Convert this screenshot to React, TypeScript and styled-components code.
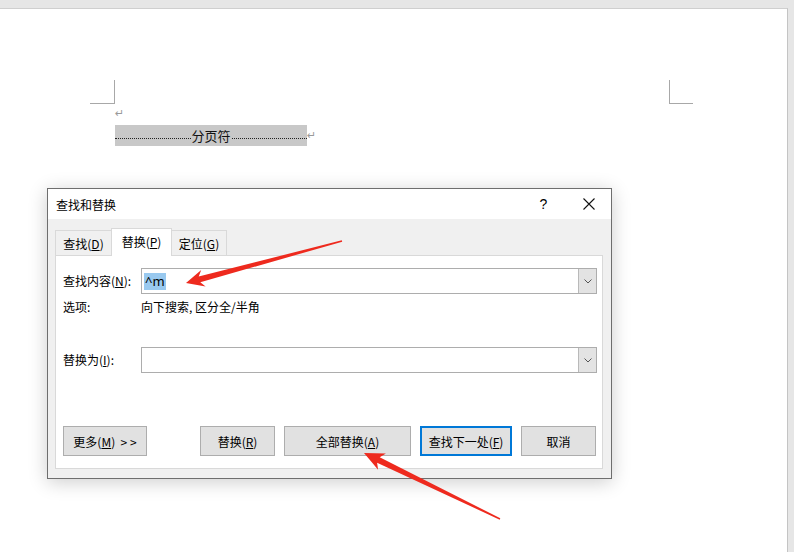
import React from "react";
import styled, { createGlobalStyle } from "styled-components";

const GlobalStyle = createGlobalStyle`
  html, body { margin: 0; padding: 0; background: #e6e6e6; }
  body { font-family: "Noto Sans CJK SC", "Noto Sans", sans-serif; }
  * { box-sizing: border-box; }
`;

const Root = styled.div`
  position: relative;
  width: 794px;
  height: 552px;
  overflow: hidden;
  background: #e6e6e6;
  padding-top: 8px;
`;

const Page = styled.div`
  width: 788px;
  height: 544px;
  background: #ffffff;
  border-top: 1px solid #cfcfcf;
  border-right: 1px solid #c4c4c4;
  padding-top: 71px;
`;

const MarkRow = styled.div`
  display: flex;
  justify-content: space-between;
  padding: 0 94px 0 90px;
`;

const CornerMark = styled.div<{ $side: "left" | "right" }>`
  width: ${(p) => (p.$side === "left" ? 25 : 24)}px;
  height: 24px;
  border-bottom: 1px solid #a8a8a8;
  ${(p) => (p.$side === "left" ? "border-right: 1px solid #a8a8a8;" : "border-left: 1px solid #a8a8a8;")}
`;

const DocBody = styled.div`
  padding-left: 115px;
`;

const ParaMark = styled.div`
  height: 21px;
  font-family: "DejaVu Sans", sans-serif;
  font-size: 11px;
  line-height: 20px;
  color: #9a9a9a;
`;

const BreakRow = styled.div`
  display: flex;
  align-items: center;
`;

const BreakBlock = styled.div`
  width: 192px;
  height: 21px;
  background: #c8c8c8;
  display: flex;
  align-items: center;
`;

const Dots = styled.span`
  flex: 1;
  align-self: flex-end;
  margin-bottom: 7px;
  border-top: 1px dotted #222;
`;

const BreakText = styled.span`
  font-size: 13px;
  line-height: 16px;
  color: #111;
  padding: 0 1px;
`;

const TrailMark = styled.span`
  font-family: "DejaVu Sans", sans-serif;
  font-size: 11px;
  color: #9a9a9a;
  margin-top: 0px;
`;

const Dialog = styled.div`
  position: absolute;
  left: 47px;
  top: 188px;
  width: 565px;
  height: 291px;
  border: 1px solid #6e6e6e;
  background: #f0f0f0;
  box-shadow: 0 3px 18px rgba(0, 0, 0, 0.2);
  display: flex;
  flex-direction: column;
  font-size: 12px;
  color: #000;
`;

const TitleBar = styled.div`
  height: 30px;
  background: #fff;
  display: flex;
  align-items: center;
  padding-left: 8px;
`;

const Title = styled.span`
  flex: 1;
  font-size: 12px;
`;

const TitleButton = styled.div`
  width: 45px;
  height: 30px;
  display: flex;
  align-items: center;
  justify-content: center;
  font-family: "Liberation Sans", sans-serif;
  font-size: 14px;
`;

const DialogBody = styled.div`
  flex: 1;
  display: flex;
  flex-direction: column;
  padding: 9px 8px 9px 7px;
`;

const TabStrip = styled.div`
  display: flex;
  align-items: flex-end;
  height: 27px;
  position: relative;
  z-index: 1;
`;

const Tab = styled.div<{ $active?: boolean; $w: number; $first?: boolean }>`
  width: ${(p) => p.$w}px;
  height: ${(p) => (p.$active ? 28 : 25)}px;
  margin-bottom: ${(p) => (p.$active ? -1 : 0)}px;
  margin-left: ${(p) => (p.$first ? 0 : -1)}px;
  background: ${(p) => (p.$active ? "#fff" : "#f0f0f0")};
  border: 1px solid #d9d9d9;
  border-bottom: none;
  position: relative;
  z-index: ${(p) => (p.$active ? 2 : 1)};
  display: flex;
  align-items: center;
  justify-content: center;
  padding-bottom: ${(p) => (p.$active ? 2 : 0)}px;
  font-size: 12px;
`;

const Panel = styled.div`
  flex: 1;
  background: #fff;
  border: 1px solid #d9d9d9;
  padding: 12px 5px 12px 7px;
  display: flex;
  flex-direction: column;
`;

const FieldRow = styled.div<{ $gap?: number }>`
  display: flex;
  align-items: center;
  margin-top: ${(p) => p.$gap ?? 0}px;
`;

const Label = styled.span`
  width: 78px;
  flex-shrink: 0;
  font-size: 12px;
  line-height: 16px;
`;

const Value = styled.span`
  font-size: 12px;
  line-height: 16px;
`;

const Combo = styled.div`
  flex: 1;
  height: 26px;
  border: 1px solid #adadad;
  background: #fff;
  display: flex;
  align-items: center;
`;

const ComboText = styled.div`
  flex: 1;
  padding-left: 2px;
  display: flex;
  align-items: center;
`;

const Selected = styled.span`
  font-family: "Noto Sans", sans-serif;
  font-size: 13px;
  line-height: 17px;
  padding: 0 1px;
  background: #99c9ef;
  color: #000;
`;

const DropButton = styled.div`
  width: 18px;
  align-self: stretch;
  background: #e3e3e3;
  border-left: 1px solid #b9b9b9;
  display: flex;
  align-items: center;
  justify-content: center;
`;

const ButtonRow = styled.div`
  margin-top: auto;
  display: flex;
  align-items: center;
  padding-right: 1px;
`;

const ButtonGroup = styled.div`
  margin-left: auto;
  display: flex;
  gap: 9px;
`;

const Button = styled.div<{ $w: number; $primary?: boolean }>`
  width: ${(p) => p.$w}px;
  height: 30px;
  background: #e1e1e1;
  border: ${(p) => (p.$primary ? "2px solid #0078d7" : "1px solid #adadad")};
  display: flex;
  align-items: center;
  justify-content: center;
  font-size: 12px;
  white-space: nowrap;
`;

const Arrows = styled.svg`
  position: absolute;
  left: 0;
  top: 0;
  pointer-events: none;
`;

type Pt = [number, number];

function arrowPoints(tail: Pt, tip: Pt, headLen: number, headW: number, tailW: number, neckW: number): string {
  const dx = tip[0] - tail[0];
  const dy = tip[1] - tail[1];
  const L = Math.hypot(dx, dy);
  const ux = dx / L;
  const uy = dy / L;
  const nx = -uy;
  const ny = ux;
  const bx = tip[0] - ux * headLen;
  const by = tip[1] - uy * headLen;
  const kx = bx + ux * 4;
  const ky = by + uy * 4;
  const pts: Pt[] = [
    [tail[0] + (nx * tailW) / 2, tail[1] + (ny * tailW) / 2],
    [kx + (nx * neckW) / 2, ky + (ny * neckW) / 2],
    [bx + (nx * headW) / 2, by + (ny * headW) / 2],
    tip,
    [bx - (nx * headW) / 2, by - (ny * headW) / 2],
    [kx - (nx * neckW) / 2, ky - (ny * neckW) / 2],
    [tail[0] - (nx * tailW) / 2, tail[1] - (ny * tailW) / 2],
  ];
  return pts.map((p) => `${p[0].toFixed(1)},${p[1].toFixed(1)}`).join(" ");
}

const Chevron = () => (
  <svg width="8" height="5" viewBox="0 0 8 5">
    <path d="M0.5 0.5 L4 4 L7.5 0.5" fill="none" stroke="#555" strokeWidth="1" />
  </svg>
);

const CloseIcon = () => (
  <svg width="12" height="12" viewBox="0 0 12 12">
    <path d="M0.5 0.5 L11.5 11.5 M11.5 0.5 L0.5 11.5" stroke="#111" strokeWidth="1.1" />
  </svg>
);

export default function App() {
  return (
    <Root>
      <GlobalStyle />
      <Page>
        <MarkRow>
          <CornerMark $side="left" />
          <CornerMark $side="right" />
        </MarkRow>
        <DocBody>
          <ParaMark>↵</ParaMark>
          <BreakRow>
            <BreakBlock>
              <Dots />
              <BreakText>分页符</BreakText>
              <Dots />
            </BreakBlock>
            <TrailMark>↵</TrailMark>
          </BreakRow>
        </DocBody>
      </Page>

      <Dialog>
        <TitleBar>
          <Title>查找和替换</Title>
          <TitleButton>?</TitleButton>
          <TitleButton>
            <CloseIcon />
          </TitleButton>
        </TitleBar>
        <DialogBody>
          <TabStrip>
            <Tab $w={57} $first>
              查找(<u>D</u>)
            </Tab>
            <Tab $w={61} $active>
              替换(<u>P</u>)
            </Tab>
            <Tab $w={56}>
              定位(<u>G</u>)
            </Tab>
          </TabStrip>
          <Panel>
            <FieldRow>
              <Label>
                查找内容(<u>N</u>):
              </Label>
              <Combo>
                <ComboText>
                  <Selected>^m</Selected>
                </ComboText>
                <DropButton>
                  <Chevron />
                </DropButton>
              </Combo>
            </FieldRow>
            <FieldRow $gap={5}>
              <Label>选项:</Label>
              <Value>向下搜索, 区分全/半角</Value>
            </FieldRow>
            <FieldRow $gap={32}>
              <Label>
                替换为(<u>I</u>):
              </Label>
              <Combo>
                <ComboText />
                <DropButton>
                  <Chevron />
                </DropButton>
              </Combo>
            </FieldRow>
            <ButtonRow>
              <Button $w={84}>
                更多(<u>M</u>)&nbsp;&nbsp;&gt; &gt;
              </Button>
              <ButtonGroup>
                <Button $w={75}>
                  替换(<u>R</u>)
                </Button>
                <Button $w={127}>
                  全部替换(<u>A</u>)
                </Button>
                <Button $w={92} $primary>
                  查找下一处(<u>F</u>)
                </Button>
                <Button $w={75}>取消</Button>
              </ButtonGroup>
            </ButtonRow>
          </Panel>
        </DialogBody>
      </Dialog>

      <Arrows width="794" height="552" viewBox="0 0 794 552">
        <polygon points={arrowPoints([342, 241], [186, 283], 18, 17, 1.5, 6)} fill="#ee2a1e" />
        <polygon points={arrowPoints([500, 519], [364, 453], 20, 18, 1.5, 6)} fill="#ee2a1e" />
      </Arrows>
    </Root>
  );
}
